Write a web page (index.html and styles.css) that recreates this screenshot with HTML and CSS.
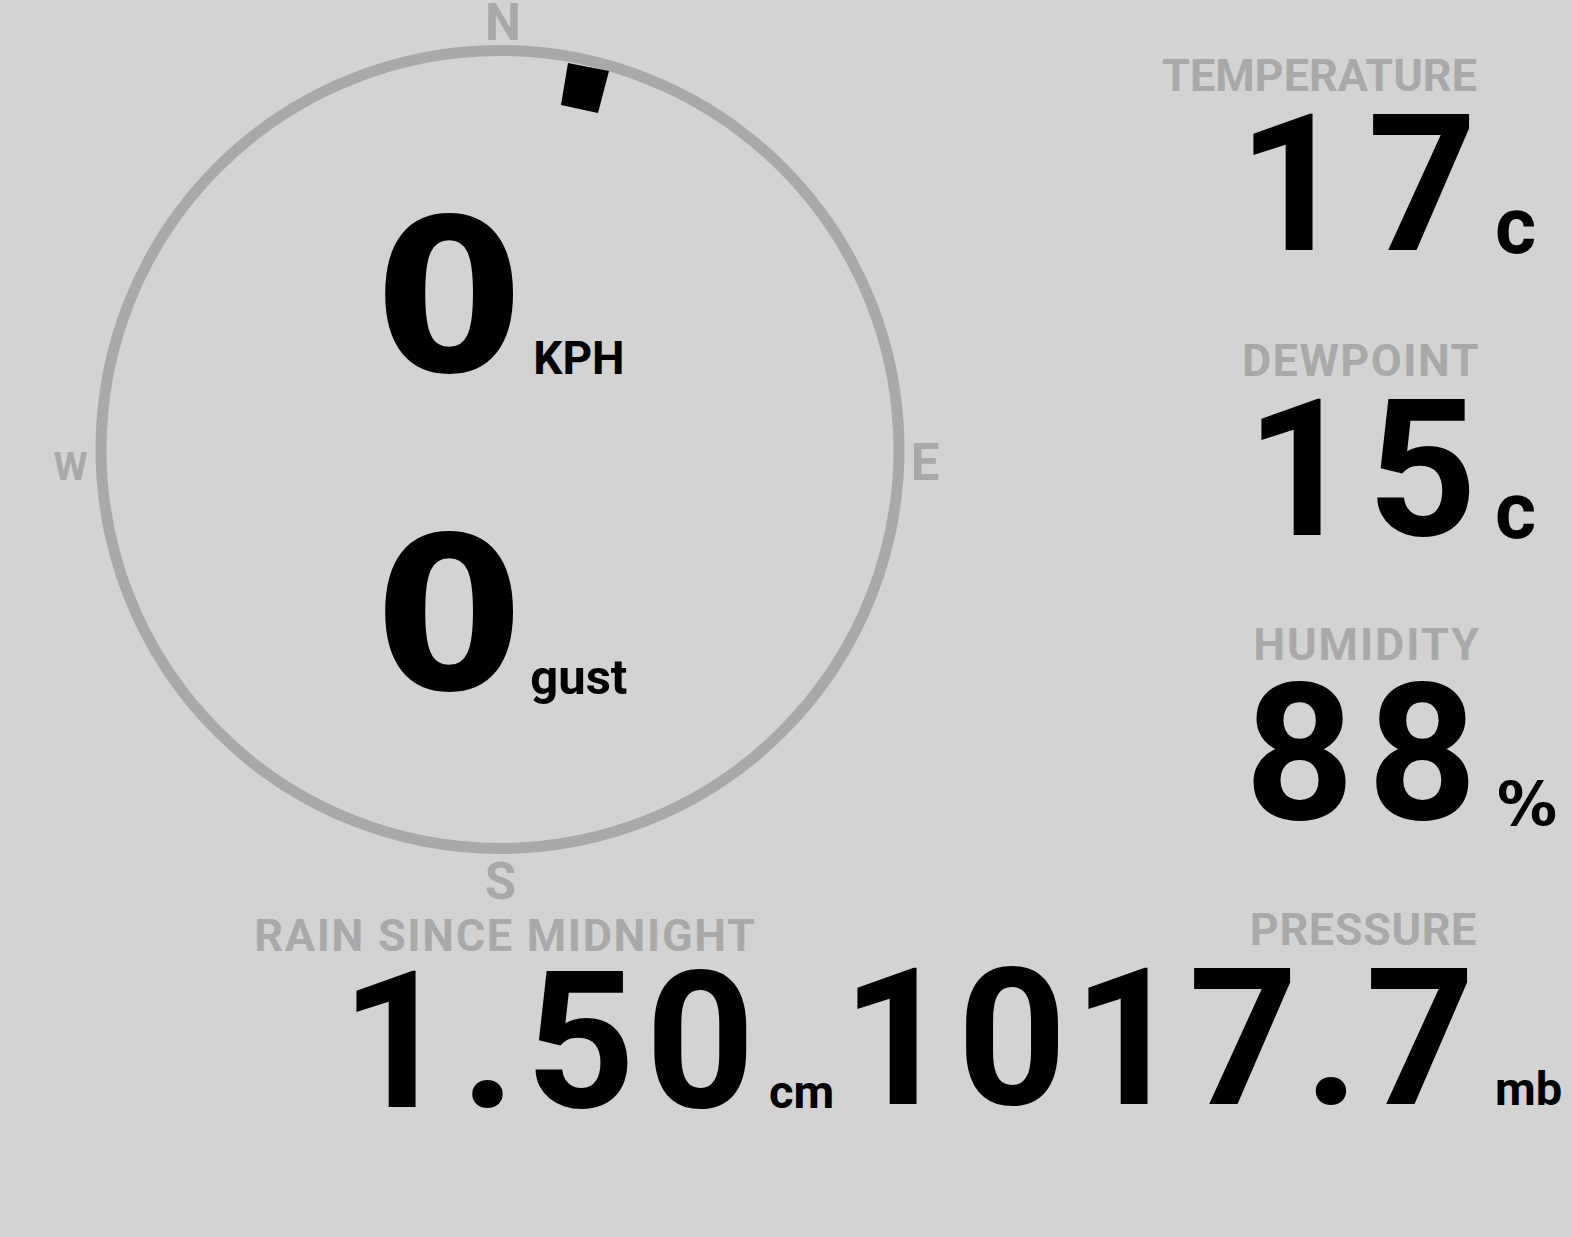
FILE: index.html
```html
<!DOCTYPE html>
<html lang="en">
<head>
<meta charset="utf-8">
<title>Weather station</title>
<link rel="stylesheet" href="styles.css">
</head>
<body>
<main class="board">
  <section class="top">
    <div class="compass">
      <svg class="dial" width="1000" height="910" viewBox="0 0 1000 910" aria-hidden="true">
        <circle cx="500" cy="449.5" r="399" fill="none" stroke="#a9a9a9" stroke-width="11"/>
        <text class="cardinal" x="503" y="40" text-anchor="middle">N</text>
        <text class="cardinal" x="925" y="480" text-anchor="middle">E</text>
        <text class="cardinal" x="500.5" y="899" text-anchor="middle">S</text>
        <text class="cardinal cardinal-w" x="70.5" y="480" text-anchor="middle">W</text>
        <polygon points="568,63 609,71 598,113 561,105" fill="#000"/>
      </svg>
      <div class="speeds">
        <div class="speed"><span class="speed-val">0</span><span class="speed-unit">KPH</span></div>
        <div class="speed"><span class="speed-val">0</span><span class="speed-unit speed-unit-gust">gust</span></div>
      </div>
    </div>
    <div class="metrics">
      <div class="metric">
        <div class="label">TEMPERATURE</div>
        <div class="num num-temp">17</div>
        <div class="unit">c</div>
      </div>
      <div class="metric">
        <div class="label label-dew">DEWPOINT</div>
        <div class="num num-dew">15</div>
        <div class="unit">c</div>
      </div>
      <div class="metric">
        <div class="label label-hum">HUMIDITY</div>
        <div class="num num-hum">88</div>
        <div class="unit unit-pct">%</div>
      </div>
    </div>
  </section>
  <section class="bottom">
    <div class="metric rain">
      <div class="label label-rain">RAIN SINCE MIDNIGHT</div>
      <div class="num num-rain">1.50</div>
      <div class="unit unit-small">cm</div>
    </div>
    <div class="metric pressure">
      <div class="label label-press">PRESSURE</div>
      <div class="num num-press">1017.7</div>
      <div class="unit unit-small unit-mb">mb</div>
    </div>
  </section>
</main>
</body>
</html>
```
FILE: styles.css
```css
html, body {
  margin: 0;
  padding: 0;
  background: #d3d3d3;
}

.board {
  width: 1571px;
  height: 1237px;
  overflow: hidden;
  background: #d3d3d3;
  font-family: Roboto, "Liberation Sans", sans-serif;
  font-weight: 700;
  color: #000;
}

.top {
  display: flex;
  height: 854px;
}

.compass {
  position: relative;
  width: 1000px;
  flex: none;
}

.dial {
  position: absolute;
  left: 0;
  top: 0;
  overflow: visible;
}

.cardinal {
  font-family: Roboto, "Liberation Sans", sans-serif;
  font-weight: 700;
  font-size: 51px;
  fill: #a9a9a9;
}

.cardinal-w {
  font-size: 39px;
}

.speeds {
  position: relative;
  display: flex;
  flex-direction: column;
  gap: 105px;
  padding-top: 191px;
  padding-left: 375px;
}

.speed {
  display: flex;
  align-items: baseline;
}

.speed-val {
  font-family: "DejaVu Sans", sans-serif;
  font-weight: 700;
  font-size: 213px;
  line-height: 213px;
}

.speed-unit {
  margin-left: 10px;
  font-size: 46px;
  line-height: 46px;
  position: relative;
  top: 3px;
}

.speed-unit-gust {
  font-size: 49px;
  margin-left: 7px;
  top: 5px;
}

.metrics {
  margin-left: auto;
  padding-top: 53px;
  display: flex;
  flex-direction: column;
}

.metric {
  display: grid;
  grid-template-columns: auto 94px;
  align-items: baseline;
  align-content: start;
  height: 284.7px;
  flex: none;
}

.label {
  grid-column: 1;
  grid-row: 1;
  justify-self: end;
  font-size: 45px;
  line-height: 45px;
  color: #a9a9a9;
  white-space: nowrap;
}

.label-dew { letter-spacing: 1.5px; margin-right: -3px; }
.label-hum { letter-spacing: 2px; margin-right: -4px; }
.label-press { letter-spacing: 0.6px; }
.label-rain { letter-spacing: 1.7px; margin-right: -1.7px; }

.num {
  grid-column: 1;
  grid-row: 2;
  justify-self: end;
  font-size: 191px;
  line-height: 175px;
  white-space: nowrap;
}

.num-temp { letter-spacing: 20px; margin-right: -20px; }
.num-dew { letter-spacing: 12px; margin-right: -12px; }
.num-hum { letter-spacing: 13px; margin-right: -13px; }
.num-rain { letter-spacing: 10px; margin-right: -10px; }
.num-press { letter-spacing: 6px; margin-right: -4px; }

.unit {
  grid-column: 2;
  grid-row: 2;
  margin-left: 18px;
  font-size: 79px;
  line-height: 79px;
  position: relative;
  top: 3px;
}

.unit-pct {
  font-family: "DejaVu Sans", sans-serif;
  font-size: 60px;
  line-height: 60px;
  margin-left: 20px;
  top: 6px;
}

.unit-small {
  font-size: 47px;
  line-height: 47px;
  margin-left: 14px;
  top: 1px;
}

.unit-mb {
  margin-left: 18px;
}

.bottom {
  display: flex;
  padding-top: 53px;
}

.rain {
  grid-template-columns: 755px 76px;
  flex: none;
}

.label-rain {
  padding-top: 6px;
}

.rain .num {
  line-height: 169px;
}

.pressure {
  flex: 1;
  grid-template-columns: minmax(0, 1fr) 94px;
}
```
